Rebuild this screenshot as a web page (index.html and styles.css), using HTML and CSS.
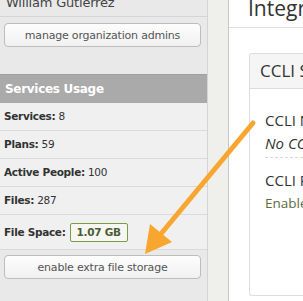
FILE: index.html
```html
<!DOCTYPE html>
<html>
<head>
<meta charset="utf-8">
<link rel="stylesheet" href="styles.css">
</head>
<body>
<div class="page">
  <aside class="sidebar">
    <div class="user">William Gutierrez</div>
    <div class="btn-wrap"><button class="btn">manage organization admins</button></div>
    <div class="panel-title">Services Usage</div>
    <div class="row"><b>Services:</b> 8</div>
    <div class="row"><b>Plans:</b> 59</div>
    <div class="row"><b>Active People:</b> 100</div>
    <div class="row"><b>Files:</b> 287</div>
    <div class="row row-space"><b>File Space:</b> <span class="badge">1.07 GB</span></div>
    <div class="btn-wrap btn-wrap-low"><button class="btn">enable extra file storage</button></div>
  </aside>
  <div class="gutter"></div>
  <main class="main">
    <h1 class="title">Integrations</h1>
    <section class="card">
      <div class="card-head">CCLI Song Select</div>
      <div class="card-body">
        <div class="field">
          <div class="label">CCLI Number</div>
          <div class="empty">No CCLI number</div>
        </div>
        <div class="field field-last">
          <div class="label">CCLI Reporting</div>
          <div class="enabled">Enabled</div>
        </div>
      </div>
    </section>
  </main>
</div>
<svg class="arrow" width="303" height="301" viewBox="0 0 303 301">
  <line x1="253" y1="123" x2="160" y2="235" stroke="#f8a630" stroke-width="5" stroke-linecap="round"/>
  <polygon points="145,254 150,224 172,242" fill="#f8a630"/>
</svg>
</body>
</html>
```
FILE: styles.css
```css
html, body {
  margin: 0;
  padding: 0;
  overflow: hidden;
}
body {
  width: 303px;
  height: 301px;
  position: relative;
  background: #fff;
}
.page {
  display: flex;
  height: 301px;
}
.sidebar {
  width: 207px;
  flex: none;
  background: #e9e9e9;
  border-right: 1px solid #d4d4d4;
  font-family: "DejaVu Sans", sans-serif;
  color: #333;
}
.user {
  height: 16px;
  line-height: 5px;
  font-size: 13px;
  padding-left: 6px;
  border-bottom: 1px solid #d2d5dc;
  color: #444;
  letter-spacing: -0.2px;
}
.btn-wrap {
  padding: 6px 6px 27px 4px;
}
.btn-wrap-low {
  padding-top: 5px;
}
.btn {
  display: block;
  width: 197px;
  height: 24px;
  border: 1px solid #bdbdbd;
  border-radius: 4px;
  background: linear-gradient(#fdfdfd, #f1f1f1);
  font-family: "DejaVu Sans", sans-serif;
  font-size: 11px;
  letter-spacing: -0.2px;
  color: #555;
  padding: 0;
}
.panel-title {
  height: 29px;
  line-height: 29px;
  background: #aaaaaa;
  color: #fff;
  font-weight: bold;
  font-size: 12px;
  letter-spacing: -0.3px;
  padding-left: 5px;
  border-top: 1px solid #9f9f9f;
  box-sizing: border-box;
}
.row {
  height: 28px;
  line-height: 27px;
  box-sizing: border-box;
  border-bottom: 1px solid #d9d9de;
  background: #f0f0f0;
  padding-left: 4px;
  font-size: 10.5px;
  letter-spacing: -0.3px;
  color: #333;
}
.row-space {
  height: 35px;
  line-height: 34px;
}
.badge {
  display: inline-block;
  line-height: 17px;
  padding: 0 6px;
  border: 1px solid #7c9a4e;
  border-radius: 2px;
  background: #f6f7f1;
  color: #4b5d34;
  font-weight: bold;
  margin-left: 1px;
}
.gutter {
  width: 20px;
  flex: none;
  background: #efefec;
  border-right: 1px solid #c8c8c8;
}
.main {
  flex: 1;
  background: #fff;
  font-family: "Open Sans", sans-serif;
  color: #333;
  min-width: 0;
}
.title {
  margin: 0;
  height: 27px;
  line-height: 16px;
  font-size: 21px;
  font-weight: normal;
  padding-left: 19px;
  border-bottom: 1px solid #e0e0e0;
  white-space: nowrap;
  overflow: hidden;
}
.card {
  margin: 25px 0 0 20px;
  height: 243px;
  box-sizing: border-box;
  border: 1px solid #dddddd;
  border-right: none;
  border-radius: 3px 0 0 3px;
  white-space: nowrap;
  overflow: hidden;
}
.card-head {
  height: 34px;
  line-height: 34px;
  background: #f5f5f5;
  border-bottom: 1px solid #dddddd;
  font-size: 17px;
  padding-left: 10px;
}
.card-body {
  padding: 19px 0 0 15px;
}
.field {
  border-bottom: 1px dashed #d8d8d8;
  padding-bottom: 3px;
  margin-bottom: 10px;
}
.field-last {
  border-bottom: none;
}
.label {
  font-size: 15px;
  line-height: 24px;
}
.empty {
  font-style: italic;
  font-size: 15px;
  line-height: 22px;
}
.enabled {
  color: #5b6b3e;
  font-size: 13.5px;
  line-height: 22px;
}
.arrow {
  position: absolute;
  left: 0;
  top: 0;
}
```
